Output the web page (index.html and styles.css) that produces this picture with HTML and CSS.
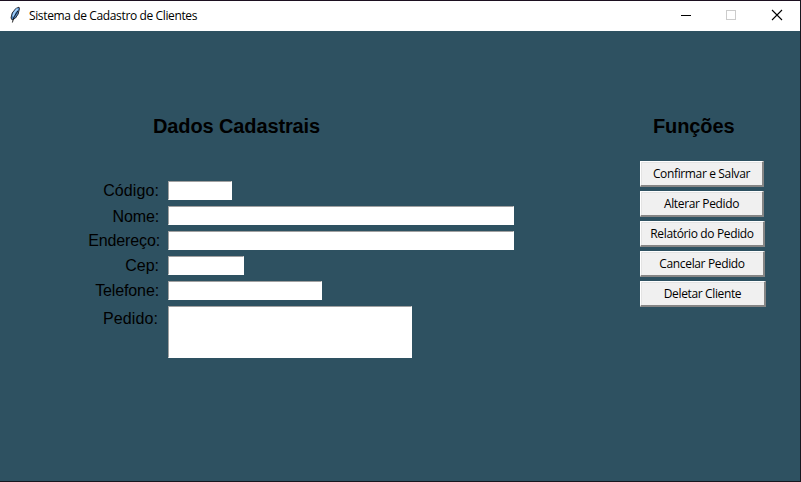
FILE: index.html
```html
<!DOCTYPE html>
<html lang="pt-BR">
<head>
<meta charset="utf-8">
<title>Sistema de Cadastro de Clientes</title>
<link rel="stylesheet" href="styles.css">
</head>
<body>
<div class="window">
  <header class="titlebar">
    <svg class="feather" width="12" height="18" viewBox="0 0 12 18">
      <path d="M10 1.2 L6.8 2.5 L3.2 7 L2 12 L3.2 14 L6.5 12 L9.2 8 L10.5 2.5 Z" fill="#4b84c4" stroke="#1c1c22" stroke-width=".9"/>
      <path d="M8.6 2.6 L5.2 6.8 L4.2 10.5" stroke="#a5d0f8" stroke-width="1.8" fill="none"/>
      <path d="M8.8 5 L5 11 L3.4 16.5" stroke="#111" stroke-width=".9" fill="none"/>
    </svg>
    <h1 class="title">Sistema de Cadastro de Clientes</h1>
    <div class="controls">
      <svg width="10" height="10" shape-rendering="crispEdges"><path d="M0 5.5H10" stroke="#000"/></svg>
      <svg width="10" height="10" shape-rendering="crispEdges"><path d="M.5 .5H9.5V9.5H.5Z" fill="none" stroke="#ccc"/></svg>
      <svg class="close" width="10" height="10"><path d="M0 0L10 10M10 0L0 10" stroke="#000" stroke-width="1.1"/></svg>
    </div>
  </header>
  <main class="content">
    <section class="form">
      <h2 class="heading">Dados Cadastrais</h2>
      <div class="row"><label class="label codigo" for="codigo">Código:</label><input class="field w-codigo" id="codigo"></div>
      <div class="row"><label class="label nome" for="nome">Nome:</label><input class="field w-long" id="nome"></div>
      <div class="row"><label class="label endereco" for="endereco">Endereço:</label><input class="field w-long" id="endereco"></div>
      <div class="row"><label class="label cep" for="cep">Cep:</label><input class="field w-cep" id="cep"></div>
      <div class="row"><label class="label telefone" for="telefone">Telefone:</label><input class="field w-telefone" id="telefone"></div>
      <div class="row"><label class="label pedido" for="pedido">Pedido:</label><textarea class="field w-pedido" id="pedido"></textarea></div>
    </section>
    <section class="actions">
      <h2 class="heading">Funções</h2>
      <button class="button confirmar">Confirmar e Salvar</button>
      <button class="button alterar">Alterar Pedido</button>
      <button class="button relatorio">Relatório do Pedido</button>
      <button class="button cancelar">Cancelar Pedido</button>
      <button class="button deletar">Deletar Cliente</button>
    </section>
  </main>
</div>
</body>
</html>
```
FILE: styles.css
```css
* { box-sizing: border-box; }
body { margin: 0; background: #17171f; overflow: hidden; }
.window {
  width: 801px;
  height: 482px;
  border: solid #17171f;
  border-width: 1px 1px 1px 0;
  border-top-color: #1c1020;
  display: flex;
  flex-direction: column;
}
.titlebar {
  height: 30px;
  background: #fff;
  display: flex;
  align-items: center;
  padding: 0 18px 0 9px;
}
.feather { margin: 0 8px 2px 0; }
.title {
  margin: 0;
  font: 400 12px/16px "Open Sans", "Noto Sans", sans-serif;
  letter-spacing: -0.37px;
  color: #000;
  white-space: nowrap;
}
.controls { margin: 0 0 2px auto; display: flex; gap: 35px; }
.controls svg { display: block; overflow: visible; }
.controls .close { margin-left: 1px; }
.content {
  flex: 1;
  background: #2e5161;
  display: flex;
  font-family: "Liberation Sans", Arial, sans-serif;
  color: #000;
}
.form { width: 640px; padding-top: 83px; }
.heading { margin: 0; font-size: 20px; line-height: 24px; font-weight: 700; letter-spacing: -0.12px; white-space: nowrap; }
.form .heading { padding-left: 153px; margin-bottom: 43px; }
.row { display: flex; align-items: flex-start; height: 25px; }
.label {
  width: 168px;
  flex: none;
  text-align: right;
  padding-top: 1px;
  padding-right: 9px;
  font-size: 16px;
  line-height: 18px;
  white-space: nowrap;
}
.nome { padding-top: 2px; letter-spacing: -0.15px; }
.endereco { padding-right: 8px; letter-spacing: -0.12px; }
.telefone { letter-spacing: -0.12px; }
.codigo { letter-spacing: 0.1px; }
.pedido { padding-top: 4px; padding-right: 10px; letter-spacing: 0.1px; }
.field {
  display: block;
  height: 19px;
  margin: 0;
  padding: 0 2px;
  border: solid;
  border-width: 1px;
  border-color: #a0a0a0 #fff #fff #a0a0a0;
  border-radius: 0;
  background: #fff;
  outline: none;
  resize: none;
}
.w-codigo { width: 64px; }
.w-long { width: 346px; }
.w-cep { width: 76px; }
.w-telefone { width: 154px; }
.w-pedido { width: 244px; height: 52px; }
.actions {
  padding-top: 83px;
  display: flex;
  flex-direction: column;
  align-items: flex-start;
  gap: 4px;
}
.actions .heading { padding-left: 13px; margin-bottom: 19px; }
.button {
  width: 124px;
  height: 26px;
  margin: 0;
  padding: 0;
  border: solid;
  border-width: 1px 2px 2px 1px;
  border-color: #fff #858585 #858585 #fff;
  border-radius: 0;
  background: #f0f0f0;
  box-shadow: inset 1px 1px #e3e3e3;
  font: 400 12px/16px "Open Sans", "Noto Sans", sans-serif;
  letter-spacing: -0.36px;
  color: #000;
  white-space: nowrap;
}
.relatorio, .cancelar { width: 125px; }
.deletar { width: 126px; }
```
